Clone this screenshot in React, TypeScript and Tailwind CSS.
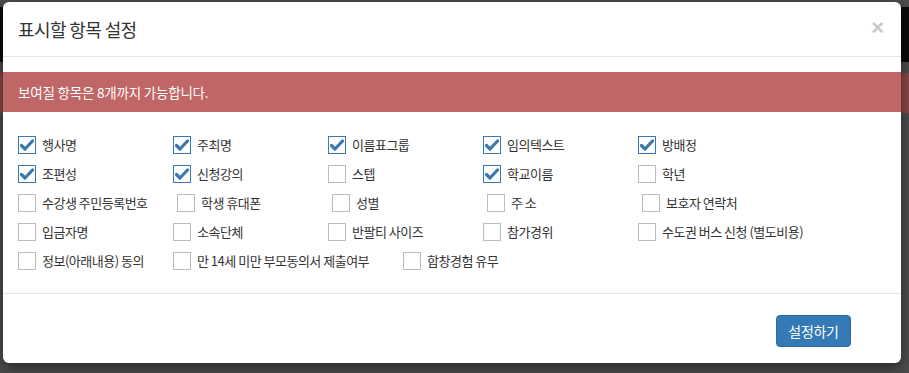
import { useState } from 'react';

// 표시할 항목 목록 (행 단위)
type Item = { label: string; checked: boolean; width?: string };

const ROWS: Item[][] = [
  [
    { label: '행사명', checked: true },
    { label: '주최명', checked: true },
    { label: '이름표그룹', checked: true },
    { label: '임의텍스트', checked: true },
    { label: '방배정', checked: true },
  ],
  [
    { label: '조편성', checked: true },
    { label: '신청강의', checked: true },
    { label: '스텝', checked: false },
    { label: '학교이름', checked: true },
    { label: '학년', checked: false },
  ],
  [
    { label: '수강생 주민등록번호', checked: false, width: 'w-[159px]' },
    { label: '학생 휴대폰', checked: false },
    { label: '성별', checked: false },
    { label: '주 소', checked: false },
    { label: '보호자 연락처', checked: false },
  ],
  [
    { label: '입금자명', checked: false },
    { label: '소속단체', checked: false },
    { label: '반팔티 사이즈', checked: false },
    { label: '참가경위', checked: false },
    { label: '수도권 버스 신청 (별도비용)', checked: false },
  ],
  [
    { label: '정보(아래내용) 동의', checked: false },
    { label: '만 14세 미만 부모동의서 제출여부', checked: false, width: 'w-[230px]' },
    { label: '합창경험 유무', checked: false },
  ],
];

const FONT = "font-['Noto_Sans_CJK_KR','Noto_Sans',sans-serif]";

function CheckBox({ checked }: { checked: boolean }) {
  return (
    <span
      className={
        checked
          ? 'flex h-[18px] w-[18px] shrink-0 items-center justify-center border-[1.5px] border-[#3a78b2] bg-white'
          : 'flex h-[18px] w-[18px] shrink-0 items-center justify-center border border-[#bdbdbd] bg-white'
      }
    >
      {checked && (
        <svg width="14" height="12" viewBox="0 0 14 12">
          <path
            d="M1.5 6.5 L5 10 L12.5 2"
            fill="none"
            stroke="#3a78b2"
            strokeWidth="3.2"
            strokeLinecap="round"
            strokeLinejoin="round"
          />
        </svg>
      )}
    </span>
  );
}

export default function App() {
  const [rows, setRows] = useState(ROWS);

  const toggle = (r: number, i: number) => {
    setRows((prev) =>
      prev.map((row, ri) =>
        ri !== r ? row : row.map((it, ii) => (ii === i ? { ...it, checked: !it.checked } : it))
      )
    );
  };

  return (
    <div className={`relative h-[373px] w-full overflow-hidden bg-[#4d4d4d] ${FONT}`}>
      {/* 배경 페이지 흔적 */}
      <div className="absolute left-0 right-0 top-[7px] h-[55px] bg-[#0c0c0c]" />
      <div className="absolute left-0 right-0 top-[73px] h-[40px] bg-[#8a4848]" />

      {/* 모달 */}
      <div className="relative z-10 ml-[3px] mt-[2px] w-[898px] rounded-[6px] bg-white shadow-[0_5px_15px_rgba(0,0,0,0.5)]">
        {/* 헤더 */}
        <div className="flex h-[55px] items-center justify-between border-b border-[#e5e5e5] pl-[15px] pr-[17px]">
          <h4 className="text-[18px] leading-[25px] tracking-[-0.6px] text-[#333]">표시할 항목 설정</h4>
          <button className="pb-[2px] font-['Liberation_Sans',sans-serif] text-[22px] font-bold leading-none text-[#c8c8c8]">
            ×
          </button>
        </div>

        {/* 본문 */}
        <div className="pb-[18px] pt-[15px]">
          <div className="flex h-[40px] items-center bg-[#c06666] px-[15px] text-[13.5px] tracking-[-0.2px] text-white">
            보여질 항목은 8개까지 가능합니다.
          </div>

          <div className="mt-[18px] pl-[15px]">
            {rows.map((row, r) => (
              <div key={r} className="flex h-[29px] items-center">
                {row.map((it, i) => (
                  <label
                    key={it.label}
                    onClick={() => toggle(r, i)}
                    className={`flex cursor-pointer items-center gap-[6px] ${it.width ?? 'w-[155px]'}`}
                  >
                    <CheckBox checked={it.checked} />
                    <span className="whitespace-nowrap text-[13px] tracking-[-0.5px] text-[#333]">
                      {it.label}
                    </span>
                  </label>
                ))}
              </div>
            ))}
          </div>
        </div>

        {/* 푸터 */}
        <div className="flex justify-end border-t border-[#e5e5e5] pb-[16px] pr-[50px] pt-[21px]">
          <button className="h-[32px] w-[75px] rounded-[4px] border border-[#2e6da4] bg-[#337ab7] text-[14px] tracking-[-0.3px] text-white">
            설정하기
          </button>
        </div>
      </div>
    </div>
  );
}
